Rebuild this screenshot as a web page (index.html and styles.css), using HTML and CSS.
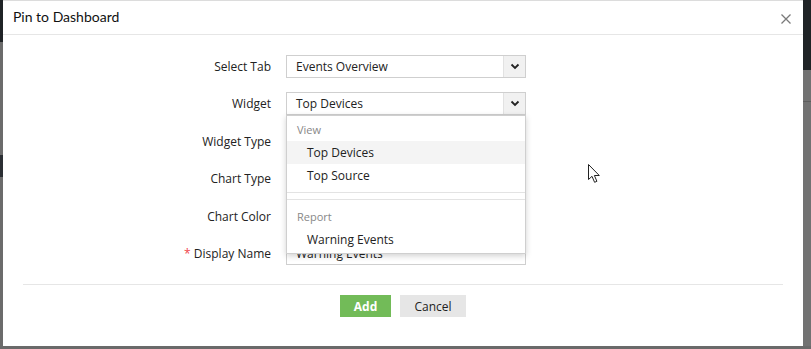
FILE: index.html
```html
<!DOCTYPE html>
<html>
<head>
<meta charset="utf-8">
<link rel="stylesheet" href="styles.css">
</head>
<body>
<div class="backdrop">
  <div class="strip strip-left"></div>
  <div class="modal">
    <div class="modal-header">
      <span class="title">Pin to Dashboard</span>
      <svg class="close" width="12" height="12" viewBox="0 0 12 12"><path d="M1.5 1.5L10.5 10.5M10.5 1.5L1.5 10.5" stroke="#7a7a7a" stroke-width="1.3" fill="none"/></svg>
    </div>
    <div class="modal-body">
      <div class="form">
        <div class="row">
          <label class="label">Select Tab</label>
          <div class="select"><span class="value">Events Overview</span><span class="arrow"><svg width="10" height="7" viewBox="0 0 10 7"><path d="M1.5 1.5L5 5L8.5 1.5" stroke="#222" stroke-width="1.8" fill="none"/></svg></span></div>
        </div>
        <div class="row">
          <label class="label">Widget</label>
          <div class="select open"><span class="value">Top Devices</span><span class="arrow"><svg width="10" height="7" viewBox="0 0 10 7"><path d="M1.5 1.5L5 5L8.5 1.5" stroke="#222" stroke-width="1.8" fill="none"/></svg></span>
            <div class="dropdown">
              <div class="group">
                <div class="group-title">View</div>
                <div class="item hover">Top Devices</div>
                <div class="item">Top Source</div>
              </div>
              <div class="group">
                <div class="group-title">Report</div>
                <div class="item">Warning Events</div>
              </div>
            </div>
          </div>
        </div>
        <div class="row">
          <label class="label">Widget Type</label>
          <div class="select"><span class="value"></span></div>
        </div>
        <div class="row">
          <label class="label">Chart Type</label>
          <div class="select"><span class="value"></span></div>
        </div>
        <div class="row">
          <label class="label">Chart Color</label>
          <div class="select"><span class="value"></span></div>
        </div>
        <div class="row">
          <label class="label"><span class="req">*</span> Display Name</label>
          <div class="input"><span class="value">Warning Events</span></div>
        </div>
      </div>
    </div>
    <div class="modal-footer">
      <button class="btn btn-add">Add</button>
      <button class="btn btn-cancel">Cancel</button>
    </div>
    <svg class="cursor" width="13" height="20" viewBox="0 0 13 20"><path d="M0.5 0.5L0.5 15.5L4 12.3L6.6 18.3L8.9 17.3L6.4 11.5L11.3 11.5Z" fill="#fff" stroke="#222" stroke-width="1" stroke-linejoin="round"/></svg>
  </div>
  <div class="strip strip-right"></div>
</div>
</body>
</html>
```
FILE: styles.css
```css
* { box-sizing: border-box; }
html, body { margin: 0; padding: 0; }
body {
  width: 811px;
  height: 349px;
  overflow: hidden;
  background: #6a6a6a;
  font-family: "Open Sans", "Noto Sans", sans-serif;
  font-size: 12px;
  color: #222;
}
.backdrop {
  display: flex;
  height: 349px;
}
.strip { flex: none; }
.strip-left {
  width: 3px;
  background: linear-gradient(to bottom, #1f2326 0, #1f2326 42px, #6b6b6b 42px, #6b6b6b 155px, #2b2f33 155px, #2b2f33 177px, #6b6b6b 177px);
  height: 346px;
}
.strip-right {
  width: 8px;
  background: linear-gradient(to bottom, #1f2326 0, #1f2326 70px, #727272 70px, #727272 101px, #5d5d5d 101px, #5d5d5d 102px, #727272 102px);
  height: 346px;
}
.modal {
  position: relative;
  width: 800px;
  height: 346px;
  background: #fff;
  border-top: 1px solid #dcdcdc;
  display: flex;
  flex-direction: column;
}
.modal-header {
  height: 34px;
  border-bottom: 1px solid #e6e6e6;
  display: flex;
  align-items: center;
  justify-content: space-between;
  padding: 0 11px 0 10px;
}
.title {
  font-family: "Lato", sans-serif;
  font-size: 14px;
  color: #111;
  margin-top: -3px;
}
.close { margin-top: 2px; }
.modal-body {
  padding: 20px 0 0 0;
  height: 249px;
}
.form {
  display: flex;
  flex-direction: column;
  gap: 14.4px;
}
.row {
  display: flex;
  align-items: center;
  height: 23px;
}
.label {
  width: 268px;
  text-align: right;
  color: #222;
}
.req { color: #f0464b; }
.select, .input {
  position: relative;
  margin-left: 15px;
  width: 240px;
  height: 23px;
  border: 1px solid #cfcfcf;
  display: flex;
  align-items: center;
  background: #fff;
}
.value {
  flex: 1;
  padding-left: 9px;
  color: #222;
}
.arrow {
  width: 22px;
  height: 21px;
  background: #f1f1f1;
  border-left: 1px solid #e2e2e2;
  display: flex;
  align-items: center;
  justify-content: center;
}
.dropdown {
  position: absolute;
  left: -1px;
  top: 22px;
  width: 240px;
  background: #fff;
  border: 1px solid #cfcfcf;
  box-shadow: 0 2px 6px rgba(0,0,0,0.18);
  padding-top: 1px;
  z-index: 5;
}
.group:first-child {
  padding: 2px 0 5px 0;
  border-bottom: 1px solid #e3e3e3;
}
.group + .group {
  border-top: 1px solid #e3e3e3;
  margin-top: 6px;
  padding: 6px 0 2px 0;
}
.group-title {
  font-size: 11px;
  color: #888;
  padding-left: 10px;
  height: 22px;
  line-height: 22px;
}
.item {
  height: 23px;
  line-height: 23px;
  padding-left: 20px;
  color: #222;
}
.item.hover { background: #f4f4f4; }
.modal-footer {
  margin: 0 20px;
  border-top: 1px solid #e6e6e6;
  display: flex;
  justify-content: center;
  gap: 9px;
  padding-top: 10px;
}
.btn {
  font-family: "Open Sans", sans-serif;
  font-size: 12px;
  height: 22px;
  border: none;
  padding: 0;
  cursor: pointer;
}
.btn-add {
  width: 51px;
  background: #72bb58;
  color: #fff;
  font-weight: bold;
}
.btn-cancel {
  width: 66px;
  background: #e6e6e6;
  color: #222;
}
.cursor {
  position: absolute;
  left: 585px;
  top: 163px;
}
```
